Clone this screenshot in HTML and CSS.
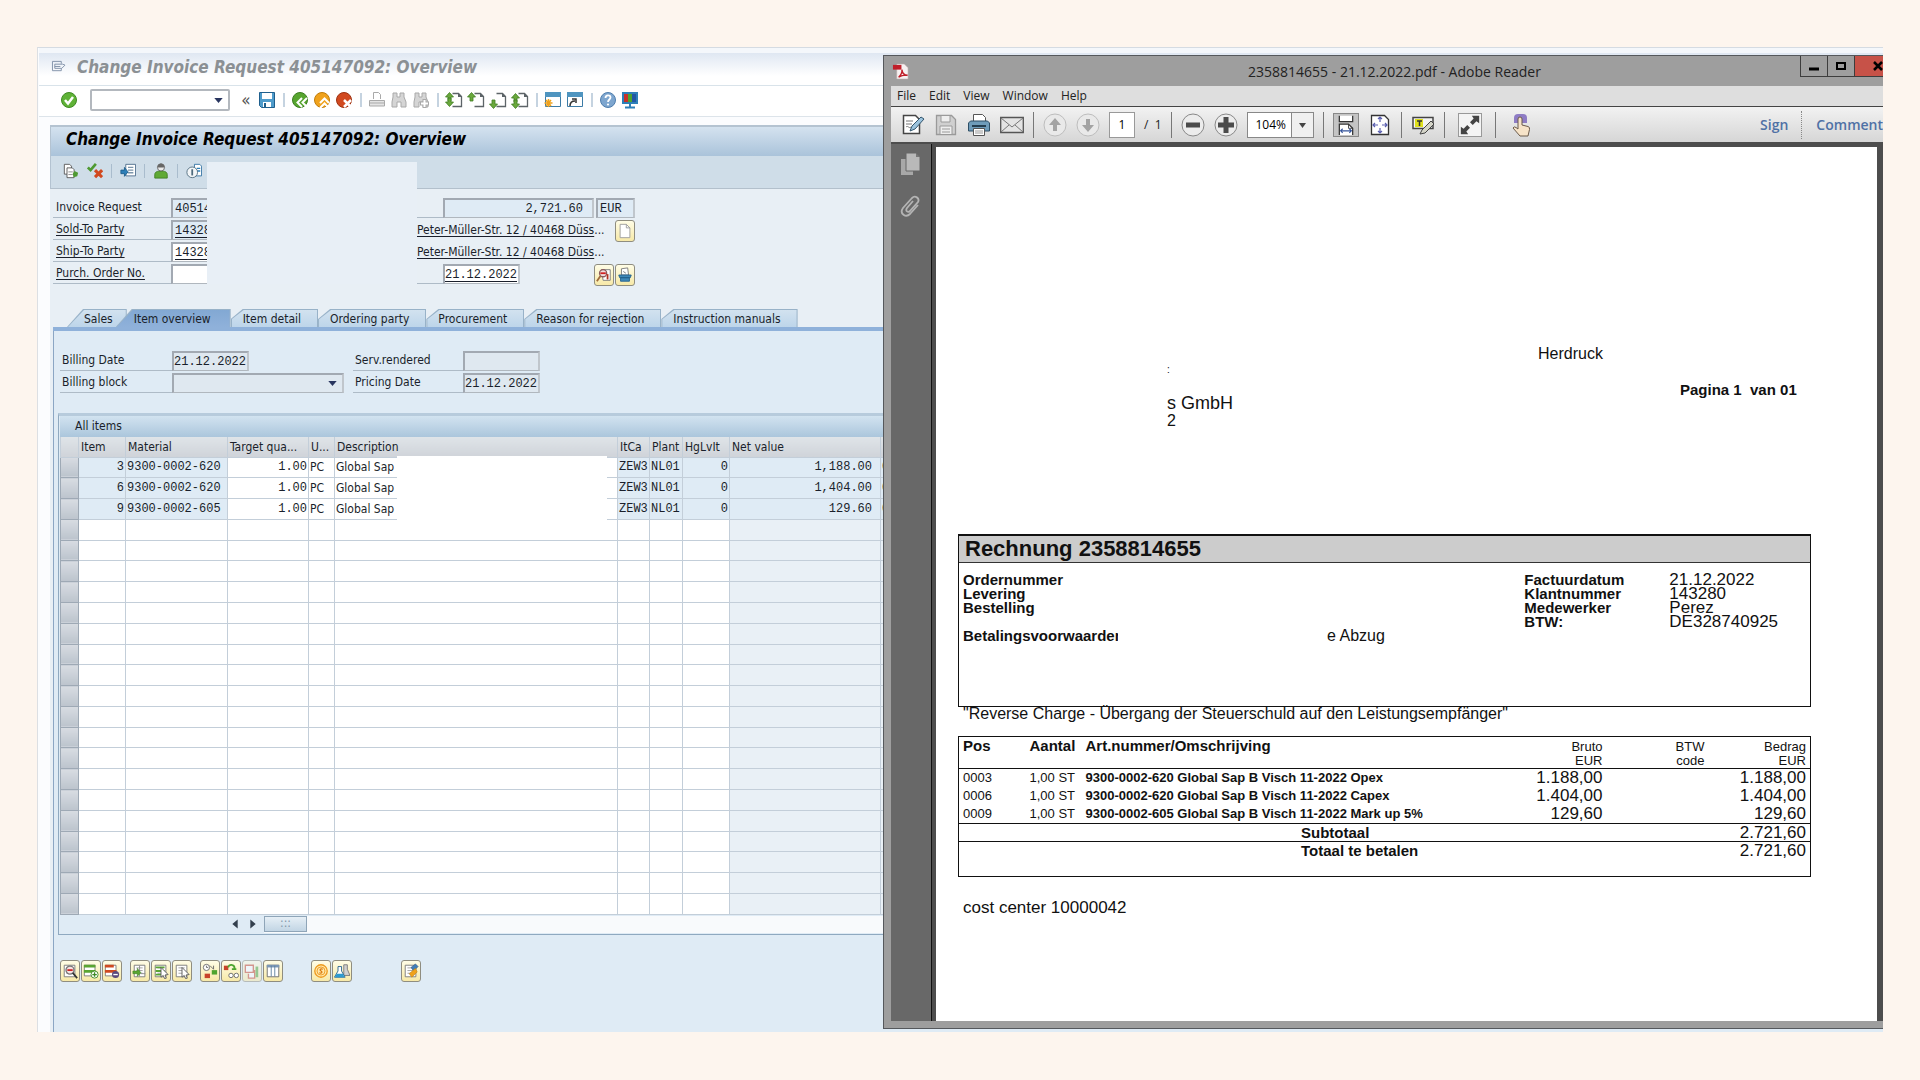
FILE: index.html
```html
<!DOCTYPE html>
<html lang="en">
  <head>
    <meta charset="UTF-8" />
    <meta name="viewport" content="width=device-width, initial-scale=1.0" />
    <title>Change Invoice Request 405147092: Overview</title>
    <link rel="stylesheet" href="styles.css">
  </head>
  <body>
    <!-- Shared icon shapes -->
    <svg class="sprite" aria-hidden="true">
      <symbol id="page" viewBox="0 0 18 18">
        <path d="M7.5 2.5h6l3 3v10h-9" fill="#fff" stroke="#5d6468" stroke-width="1.3" />
        <path d="M13 2v4h4z" fill="#5d6468" />
      </symbol>
      <symbol id="arrow-up" viewBox="0 0 18 18">
        <path d="M4.500 .5l4 4.500H6v4H3V5H.5z" fill="#6aa83c" stroke="#3f7d22" stroke-width=".8" />
      </symbol>
      <symbol id="arrow-down" viewBox="0 0 18 18">
        <path d="M4.500 17.500l4-4.500H6V9H3v4H.5z" fill="#6aa83c" stroke="#3f7d22" stroke-width=".8" />
      </symbol>
      <symbol id="binoculars" viewBox="0 0 18 18">
        <path d="M3 2h4v4h3V2h4v4l2 5v5h-5v-5H7v5H2v-5l1-5z" fill="#d5d5d5" stroke="#a9a9a9" />
      </symbol>
      <symbol id="sheet" viewBox="0 0 18 18">
        <path d="M2.500 2.500h12v13h-12z" fill="#fff" stroke="#777" />
        <path d="M5 5.500h7M5 8.500h7M5 11.500h7" stroke="#999" />
      </symbol>
      <symbol id="cursor" viewBox="0 0 18 18">
        <path d="M9 5l8 8-3.500.5L15 17l-2 .5-1.500-3.500L9 16z" fill="#fff" stroke="#555" />
      </symbol>
    </svg>

    <main class="desktop">
      <!-- SAP window -->
      <section class="sap">
        <header class="sap-title">
          <svg class="exit-icon" viewBox="0 0 16 14"><path d="M11 4V1.500H1.500v10H11V9M4 4.500h8.500L15 5.500 11.500 9H4zM4 7h6" fill="none" stroke="#7f90a8" /></svg>
          <h1>Change Invoice Request 405147092: Overview</h1>
        </header>

        <div class="sap-commands">
          <button class="icon" aria-label="Enter"><svg viewBox="0 0 18 18"><circle cx="9" cy="9" r="7.500" fill="#5fb236" stroke="#3f8a24" /><path d="M5 9l3 3.500L13 6" fill="none" stroke="#fff" stroke-width="2.500" /></svg></button>
          <select class="command" aria-label="Command"><option></option></select>
          <button class="icon chevrons" aria-label="Collapse">«</button>
          <button class="icon" aria-label="Save"><svg viewBox="0 0 18 18"><path d="M1.500 1.500h15v15h-13l-2-2z" fill="#4f9ccb" stroke="#1f5f8d" /><path d="M4 2h10v6H4zM5 11h8v5H5z" fill="#fff" /><path d="M6 12h2v4H6z" fill="#1f5f8d" /></svg></button>
          <i class="sep"></i>
          <button class="icon" aria-label="Back"><svg viewBox="0 0 18 18"><circle cx="9" cy="9" r="7.500" fill="#57a52f" stroke="#3b7d1f" /><path d="M11 7l-4.500 4.500L11 16M16 7l-4.500 4.500L16 16" fill="none" stroke="#fff" stroke-width="2" /></svg></button>
          <button class="icon" aria-label="Exit"><svg viewBox="0 0 18 18"><circle cx="9" cy="9" r="7.500" fill="#f0a21c" stroke="#c07c08" /><path d="M7 12l4.500-4.500L16 12M7 17l4.500-4.500L16 17" fill="none" stroke="#fff" stroke-width="2" /></svg></button>
          <button class="icon" aria-label="Cancel"><svg viewBox="0 0 18 18"><circle cx="9" cy="9" r="7.500" fill="#d1491f" stroke="#9e3211" /><path d="M9 9l7 7M16 9l-7 7" stroke="#fff" stroke-width="2.500" /></svg></button>
          <i class="sep"></i>
          <button class="icon" aria-label="Print"><svg viewBox="0 0 18 18"><path d="M5.500 8V1.500h5l2 2V8" fill="#fff" stroke="#a9a9a9" /><path d="M1.500 9.500h15V15h-15z" fill="#e4e4e4" stroke="#a9a9a9" /><path d="M2 12h14" stroke="#a9a9a9" /></svg></button>
          <button class="icon" aria-label="Find"><svg><use href="#binoculars" /></svg></button>
          <button class="icon" aria-label="Find next"><svg viewBox="0 0 18 18"><use href="#binoculars" /><path d="M12.500 8v9M8 12.500h9" stroke="#a9a9a9" stroke-width="4" /><path d="M12.500 9v7M9 12.500h7" stroke="#fff" stroke-width="2" /></svg></button>
          <i class="sep"></i>
          <button class="icon" aria-label="First page"><svg viewBox="0 0 18 18"><use href="#page" /><use href="#arrow-up" y="1" /><use href="#arrow-down" y="-2" /></svg></button>
          <button class="icon" aria-label="Previous page"><svg viewBox="0 0 18 18"><use href="#page" /><use href="#arrow-up" y="1" /></svg></button>
          <button class="icon" aria-label="Next page"><svg viewBox="0 0 18 18"><use href="#page" /><use href="#arrow-down" /></svg></button>
          <button class="icon" aria-label="Last page"><svg viewBox="0 0 18 18"><use href="#page" /><use href="#arrow-up" y="2" /><use href="#arrow-down" /></svg></button>
          <i class="sep"></i>
          <button class="icon" aria-label="New session"><svg viewBox="0 0 18 18"><path d="M1.500 1.500h15v14h-15z" fill="#fff" stroke="#3c7ba6" /><path d="M1 1h16v5H1z" fill="#4f95c0" /><path d="M4.500 8v8M.5 12h8M2 9l5 6M7 9l-5 6" stroke="#f0a21c" stroke-width="1.500" /></svg></button>
          <button class="icon" aria-label="Shortcut"><svg viewBox="0 0 18 18"><path d="M1.500 1.500h15v14h-15z" fill="#fff" stroke="#3c7ba6" /><path d="M1 1h16v5H1z" fill="#4f95c0" /><path d="M4 15c0-3 1-5 5-5M6 8h4v4" fill="none" stroke="#333" stroke-width="1.500" /></svg></button>
          <i class="sep"></i>
          <button class="icon" aria-label="Help"><svg viewBox="0 0 18 18"><circle cx="9" cy="9" r="7.500" fill="#7ea6cf" stroke="#4f7eae" /><path d="M6.500 7c0-3.500 5-3.500 5-.5 0 2-2.500 2-2.500 4.500" fill="none" stroke="#fff" stroke-width="1.800" /><circle cx="9" cy="13.500" r="1.100" fill="#fff" /></svg></button>
          <button class="icon" aria-label="Layout"><svg viewBox="0 0 18 18"><path d="M1 1h16v12H1z" fill="#2d7fb8" /><path d="M3 3h4v8H3z" fill="#c8322b" /><path d="M7 3h4v8H7z" fill="#4ea52f" /><path d="M11 3h4v8h-4z" fill="#2257a5" /><path d="M9 13v3M4 16.500h10" stroke="#2d7fb8" stroke-width="2" /></svg></button>
        </div>

        <div class="sap-body">
          <h2 class="sap-heading">Change Invoice Request 405147092: Overview</h2>
          <div class="sap-actions">
            <button class="icon small" aria-label="Display flow"><svg viewBox="0 0 18 18"><path d="M1.500 1.500h6l2 2v9h-8z" fill="#fff" stroke="#555" /><path d="M4.500 5.500h6l2 2v9h-8z" fill="#fff" stroke="#555" /><path d="M6 10h5M6 13h5" stroke="#888" /><path d="M11 12l2-3 4 2-1 4-4 1z" fill="#4f9a32" /></svg></button>
            <button class="icon small" aria-label="Check"><svg viewBox="0 0 18 18"><path d="M1 5l3 3 6-7" fill="none" stroke="#4f9a32" stroke-width="3" /><path d="M9 8l8 8M17 8l-8 8" stroke="#d1491f" stroke-width="3.500" /></svg></button>
            <i class="sep"></i>
            <button class="icon small" aria-label="Import"><svg viewBox="0 0 18 18"><path d="M6.500 1.500h11v13h-11z" fill="#fff" stroke="#4a6a8a" /><path d="M9 5h6M9 8h6M9 11h6" stroke="#7c95ab" stroke-width="1.500" /><path d="M1 8h4V5l4 5-4 5v-3H1z" fill="#2d7fb8" stroke="#1f5f8d" /></svg></button>
            <i class="sep"></i>
            <button class="icon small" aria-label="Partner"><svg viewBox="0 0 18 18"><path d="M2 17v-4c0-3 3-4 7-4s7 1 7 4v4z" fill="#5fa935" stroke="#3f7d22" /><circle cx="9" cy="5" r="4" fill="#e9e9e9" stroke="#666" /><path d="M5 5c0-6 8-6 8 0z" fill="#666" /></svg></button>
            <i class="sep"></i>
            <button class="icon small" aria-label="Details"><svg viewBox="0 0 18 18"><path d="M9.500 1.500h6l2 2v11h-8z" fill="#fff" stroke="#2d6fa0" /><path d="M12 6h4M12 9h4" stroke="#2d7fb8" stroke-width="1.500" /><circle cx="7" cy="10.500" r="6" fill="#f3f6f8" stroke="#4f6b7d" /><path d="M7 7v7" stroke="#4f6b7d" stroke-width="2" /></svg></button>
          </div>

          <form class="head-form">
            <label class="lbl" for="request">Invoice Request</label>
            <input class="fld ro" id="request" value="405147092" readonly />
            <span class="lead"></span>
            <input class="fld ro num" aria-label="Net value" value="2,721.60" readonly />
            <input class="fld ro cur" aria-label="Currency" value="EUR" readonly />

            <label class="lbl" for="sold-to"><u>Sold-To Party</u></label>
            <input class="fld ro under" id="sold-to" value="143280" readonly />
            <span class="address"><u>Peter-Müller-Str. 12 / 40468 Düss</u>...</span>
            <button class="tool doc-btn" type="button" aria-label="Create"><svg viewBox="0 0 18 18"><path d="M3.500 1.500h7l4 4v11h-11z" fill="#fff" stroke="#999" /><path d="M10.500 1.500v4h4" fill="none" stroke="#999" /></svg></button>

            <label class="lbl" for="ship-to"><u>Ship-To Party</u></label>
            <input class="fld under" id="ship-to" value="143280" />
            <span class="address"><u>Peter-Müller-Str. 12 / 40468 Düss</u>...</span>

            <label class="lbl" for="order-no"><u>Purch. Order No.</u></label>
            <input class="fld" id="order-no" />
            <span class="lead"></span>
            <input class="fld date under" aria-label="Order date" value="21.12.2022" />
            <span class="form-tools">
              <button class="tool" type="button" aria-label="Display document"><svg viewBox="0 0 18 18"><path d="M6 3h10v12H8z" fill="#fff" stroke="#777" /><circle cx="8" cy="7" r="4" fill="#eedede" stroke="#8b5b5b" stroke-width="1.500" /><path d="M5 7h6" stroke="#d02020" stroke-width="2" /><path d="M5 10l-4 6" stroke="#a06a3a" stroke-width="2" /><path d="M13 8v6" stroke="#b03020" stroke-width="2" /></svg></button>
              <button class="tool" type="button" aria-label="Header data"><svg viewBox="0 0 18 18"><path d="M5 2l7-1 1 8H5z" fill="#fff" stroke="#777" /><path d="M7 5l3 2" stroke="#777" /><path d="M2 9h14l-1 3H3zM4 12h10v4H4z" fill="#3f88b8" stroke="#22608c" /></svg></button>
            </span>
            <div class="mask mask-form"></div>
          </form>

          <nav class="tabs">
            <button class="tab first">Sales</button>
            <button class="tab active">Item overview</button>
            <button class="tab">Item detail</button>
            <button class="tab">Ordering party</button>
            <button class="tab">Procurement</button>
            <button class="tab">Reason for rejection</button>
            <button class="tab">Instruction manuals</button>
          </nav>

          <div class="panel">
            <form class="billing">
              <label class="lbl" for="billing-date">Billing Date</label>
              <input class="fld gray date" id="billing-date" value="21.12.2022" readonly />
              <label class="lbl" for="rendered">Serv.rendered</label>
              <input class="fld gray date" id="rendered" readonly />
              <label class="lbl" for="block">Billing block</label>
              <select class="fld gray block" id="block"><option></option></select>
              <label class="lbl" for="pricing">Pricing Date</label>
              <input class="fld gray date" id="pricing" value="21.12.2022" readonly />
            </form>

            <div class="items">
              <h3>All items</h3>
              <div class="items-grid">
                <table id="items">
                  <colgroup>
                    <col class="c-sel"><col class="c-item"><col class="c-mat"><col class="c-qty"><col class="c-unit"><col class="c-desc"><col class="c-cat"><col class="c-plant"><col class="c-lvl"><col class="c-net"><col>
                  </colgroup>
                  <thead>
                    <tr><th></th><th>Item</th><th>Material</th><th>Target qua...</th><th>U...</th><th>Description</th><th>ItCa</th><th>Plant</th><th>HgLvIt</th><th>Net value</th><th></th></tr>
                  </thead>
                  <tbody>
                    <tr class="filled"><td></td><td>3</td><td>9300-0002-620</td><td>1.00</td><td>PC</td><td><span>Global Sap B</span></td><td>ZEW3</td><td>NL01</td><td>0</td><td>1,188.00</td><td>0</td></tr>
                    <tr class="filled"><td></td><td>6</td><td>9300-0002-620</td><td>1.00</td><td>PC</td><td><span>Global Sap B</span></td><td>ZEW3</td><td>NL01</td><td>0</td><td>1,404.00</td><td>0</td></tr>
                    <tr class="filled"><td></td><td>9</td><td>9300-0002-605</td><td>1.00</td><td>PC</td><td><span>Global Sap B</span></td><td>ZEW3</td><td>NL01</td><td>0</td><td>129.60</td><td>0</td></tr>
                  </tbody>
                </table>
                <div class="mask mask-items"></div>
              </div>
              <div class="scroll">
                <button aria-label="Scroll left"><svg viewBox="0 0 18 18"><path d="M12 4v10L6 9z" fill="#333f4d" /></svg></button>
                <button aria-label="Scroll right"><svg viewBox="0 0 18 18"><path d="M6 4v10l6-5z" fill="#333f4d" /></svg></button>
                <div class="track"><div class="thumb">:::</div></div>
              </div>
            </div>

            <div class="item-tools">
              <div class="group">
                <button class="tool" aria-label="Details"><svg viewBox="0 0 18 18"><use href="#sheet" /><circle cx="9" cy="8" r="4.500" fill="#f6e2e2" stroke="#777" stroke-width="1.500" /><path d="M6 8h6" stroke="#d02020" stroke-width="2" /><path d="M12 11l5 6" stroke="#333" stroke-width="2" /></svg></button>
                <button class="tool" aria-label="Insert row"><svg viewBox="0 0 18 18"><path d="M1.500 2.500h12v12h-12z" fill="#fff" stroke="#777" /><path d="M1 2h13v3H1zM1 8h13v3H1z" fill="#5aa532" /><circle cx="13" cy="13" r="4" fill="#fff" stroke="#3f8a24" /><path d="M13 10.500v5M10.500 13h5" stroke="#3f8a24" stroke-width="1.500" /></svg></button>
                <button class="tool" aria-label="Delete row"><svg viewBox="0 0 18 18"><path d="M1.500 2.500h12v12h-12z" fill="#fff" stroke="#777" /><path d="M1 2h10v3H1zM1 8h13v3H1z" fill="#cf4a20" /><circle cx="13" cy="13" r="4" fill="#5b4a7d" /><path d="M10.500 13h5" stroke="#fff" stroke-width="1.500" /></svg></button>
              </div>
              <div class="group">
                <button class="tool" aria-label="Insert item"><svg viewBox="0 0 18 18"><use href="#sheet" /><path d="M8.500 3v12M10 12h5" stroke="#888" /><path d="M1 9h5V6l4 5-4 4v-3H1z" fill="#5aa532" stroke="#3f7d22" stroke-width=".6" /></svg></button>
                <button class="tool" aria-label="Select all"><svg viewBox="0 0 18 18"><use href="#sheet" /><path d="M3 4h10v2H3zM3 8h10v2H3zM3 12h10v2H3z" fill="#5aa532" /><use href="#cursor" /></svg></button>
                <button class="tool" aria-label="Deselect all"><svg viewBox="0 0 18 18"><use href="#sheet" /><use href="#cursor" /></svg></button>
              </div>
              <div class="group">
                <button class="tool" aria-label="Schedule"><svg viewBox="0 0 18 18"><circle cx="5" cy="5" r="3.500" fill="#fff" stroke="#666" /><path d="M5 3v2h2M9 3l4 4M13 3v4" fill="none" stroke="#666" /><path d="M3 12h6v5H3z" fill="#c8432a" /><path d="M11 8h6v5h-6z" fill="#4ea52f" /></svg></button>
                <button class="tool" aria-label="Display flow"><svg viewBox="0 0 18 18"><path d="M1 3h5v5H1z" fill="#c8432a" /><path d="M6 5c0-4 7-4 7 1M10 7h5" fill="none" stroke="#4ea52f" stroke-width="2" /><circle cx="9" cy="14" r="2.500" fill="#fff" stroke="#666" /><circle cx="15" cy="14" r="2.500" fill="#fff" stroke="#666" /></svg></button>
                <button class="tool off" aria-label="Analysis"><svg viewBox="0 0 18 18"><path d="M1.500 2.500h9v8h-9zM5 12v5h7V8" fill="#fff" stroke="#c8432a" stroke-width="1.500" /><path d="M13 4h3v12h-3z" fill="#4ea52f" /></svg></button>
                <button class="tool" aria-label="Configuration"><svg viewBox="0 0 18 18"><path d="M2.500 2.500h13v13h-13z" fill="#fff" stroke="#666" /><path d="M2 2h14v3H2z" fill="#7b97b5" /><path d="M7 3v12M11 3v12" stroke="#5a7d9e" /></svg></button>
              </div>
              <div class="group wide">
                <button class="tool" aria-label="Conditions"><svg viewBox="0 0 18 18"><circle cx="9" cy="9" r="7" fill="#ffe7a8" stroke="#ee9a1e" stroke-width="1.500" /><circle cx="9" cy="9" r="4.500" fill="none" stroke="#ee9a1e" /><path d="M11 7c-3-1-4 1-2 2s1 3-2 2" fill="none" stroke="#d97708" stroke-width="1.300" /></svg></button>
                <button class="tool" aria-label="Batch"><svg viewBox="0 0 18 18"><path d="M11 2h4v5l3 7h-7z" fill="#d0d0d0" stroke="#777" /><path d="M4.500 4h4v5l4 7H.5l4-7z" fill="#fff" stroke="#22608c" /><path d="M3 12h7l2 4H1z" fill="#2d9ad0" /></svg></button>
              </div>
              <div class="group last">
                <button class="tool" aria-label="Texts"><svg viewBox="0 0 18 18"><use href="#sheet" /><path d="M9 5l5-4 3 3-5 5z" fill="#3f7db8" stroke="#22507c" stroke-width=".6" /><path d="M7 12l7-6 2 4-6 6z" fill="#f0a21c" stroke="#b87a10" stroke-width=".6" /></svg></button>
              </div>
            </div>
          </div>
        </div>
      </section>

      <!-- PDF reader window -->
      <section class="reader">
        <header class="reader-title">
          <svg class="pdf-icon" viewBox="0 0 18 18"><path d="M5 1h8l4 4v12H5z" fill="#f6f1f1" stroke="#b9a9a9" stroke-width=".6" /><path d="M1 2h9v5H1z" fill="#c01f2a" /><path d="M7 15c2-2 4-5 3.500-8 .5 4 3 6 6 6-4-.5-7 .5-9.500 2z" fill="none" stroke="#c01f2a" stroke-width="1.500" /></svg>
          <span class="caption">2358814655 - 21.12.2022.pdf - Adobe Reader</span>
          <div class="window-buttons">
            <button aria-label="Minimize"><svg viewBox="0 0 10 10"><path d="M0 8h10" stroke="#000" stroke-width="3" /></svg></button>
            <button aria-label="Maximize"><svg viewBox="0 0 10 10"><path d="M1 2h8v6H1z" fill="none" stroke="#000" stroke-width="2" /></svg></button>
            <button class="close" aria-label="Close"><svg viewBox="0 0 10 10"><path d="M1 1l8 8M9 1L1 9" stroke="#000" stroke-width="2.500" /></svg></button>
          </div>
        </header>

        <nav class="menu">
          <button>File</button><button>Edit</button><button>View</button><button>Window</button><button>Help</button>
        </nav>

        <div class="reader-tools">
          <button class="rt" aria-label="Edit"><svg viewBox="0 0 24 24"><path d="M2.500 2.500h12l4 4v14h-16z" fill="#fff" stroke="#444" stroke-width="1.500" /><path d="M5 8h7M5 11h6M5 14c2-2 3 2 5 0" fill="none" stroke="#777" /><path d="M9 18l2-5 9-9 3 2-9 10z" fill="#9cc3dd" stroke="#33566e" /></svg></button>
          <button class="rt" aria-label="Save"><svg viewBox="0 0 24 24"><path d="M2.500 2.500h15l4 4v15h-19z" fill="#d0d0d0" stroke="#9a9a9a" stroke-width="1.300" /><path d="M7 3v6h9V3M6 21v-8h12v8M8 16h8M8 19h8" fill="#eee" stroke="#9a9a9a" /></svg></button>
          <button class="rt" aria-label="Print"><svg viewBox="0 0 24 24"><path d="M6.500 9V1.500h9l3 3V9" fill="#fff" stroke="#555" /><path d="M1.500 10l2-2h17l2 2v8h-21z" fill="#6f9cba" stroke="#2e4f66" /><path d="M5 13h14" stroke="#243e50" stroke-width="2" /><path d="M6.500 15.500h11v7h-11z" fill="#fff" stroke="#555" /><path d="M8 18h8M8 20h8" stroke="#999" /></svg></button>
          <button class="rt" aria-label="Mail"><svg viewBox="0 0 24 24"><path d="M.7 4.500h22.600v15H.7z" fill="#e4e4e4" stroke="#555" stroke-width="1.300" /><path d="M1 5l11 9 11-9M1 19l8-7M23 19l-8-7" fill="none" stroke="#777" /></svg></button>
          <i class="rsep"></i>
          <button class="rt" aria-label="Previous page"><svg viewBox="0 0 24 24"><circle cx="12" cy="12" r="11" fill="#e9e9e9" stroke="#bdbdbd" /><path d="M12 5l6 7h-4v6h-4v-6H6z" fill="#a3a3a3" /></svg></button>
          <button class="rt" aria-label="Next page"><svg viewBox="0 0 24 24"><circle cx="12" cy="12" r="11" fill="#e9e9e9" stroke="#bdbdbd" /><path d="M12 19l6-7h-4V6h-4v6H6z" fill="#a3a3a3" /></svg></button>
          <input class="page-no" aria-label="Page" value="1" />
          <span class="page-total">/ &nbsp;1</span>
          <i class="rsep"></i>
          <button class="rt" aria-label="Zoom out"><svg viewBox="0 0 24 24"><circle cx="12" cy="12" r="11" fill="#ececec" stroke="#888" /><path d="M5 12h14" stroke="#4b4b4b" stroke-width="5" /></svg></button>
          <button class="rt" aria-label="Zoom in"><svg viewBox="0 0 24 24"><circle cx="12" cy="12" r="11" fill="#ececec" stroke="#888" /><path d="M4 12h16M12 4v16" stroke="#4b4b4b" stroke-width="5" /></svg></button>
          <select class="zoom" aria-label="Zoom"><option>104%</option></select>
          <i class="rsep"></i>
          <button class="rt pressed" aria-label="Fit width"><svg viewBox="0 0 24 24"><path d="M4 1v7h16V1M4 24V11h11l5 5v8" fill="#fff" stroke="#333" stroke-width="1.500" /><path d="M15 11v5h5" fill="none" stroke="#333" /><path d="M6 19h12M8 16.500L5.500 19 8 21.500M16 16.500l2.500 2.500-2.500 2.500" fill="none" stroke="#35549b" stroke-width="1.300" /></svg></button>
          <button class="rt" aria-label="Fit page"><svg viewBox="0 0 24 24"><path d="M3.500 2.500h13l4 4v15h-17z" fill="#fff" stroke="#333" stroke-width="1.300" /><path d="M12 4v5M12 15v5M5 12h5M14 12h5M10 6l2-2 2 2M10 18l2 2 2-2M7 10l-2 2 2 2M17 10l2 2-2 2" fill="none" stroke="#5a5fb0" stroke-width="1.200" /></svg></button>
          <i class="rsep"></i>
          <button class="rt" aria-label="Highlight"><svg viewBox="0 0 24 24"><path d="M2 4.500h20v11H2z" fill="#f4f4f4" stroke="#444" stroke-width="1.500" /><path d="M4 6h8v8H4z" fill="#dfe01c" /><path d="M6 8h5M8.500 8v5" stroke="#333" stroke-width="1.500" /><path d="M9 21l2-4 9-9 3 3-9 9z" fill="#d4d4c8" stroke="#444" /></svg></button>
          <i class="rsep"></i>
          <button class="rt framed" aria-label="Full screen"><svg viewBox="0 0 24 24"><path d="M22 2v8l-3-2-4 4-3-3 4-4-2-3zM2 22v-8l3 2 4-4 3 3-4 4 2 3z" fill="#444" /></svg></button>
          <i class="rsep"></i>
          <button class="rt" aria-label="Touch mode"><svg viewBox="0 0 24 24"><path d="M5 10V5q0-4 4-4h5q4 0 4 4v5z" fill="#8e7cc4" /><path d="M9 16V6q0-2 2-2t2 2v6l6 1.500q2 .5 1.500 3L19 23h-8l-7-8q1-2 3-.5z" fill="#f6e3c8" stroke="#6b5a4a" /></svg></button>
          <a class="pane" href="#sign">Sign</a>
          <a class="pane dotted" href="#comment">Comment</a>
        </div>

        <div class="reader-main">
          <aside class="rail">
            <button class="rt" aria-label="Page thumbnails"><svg viewBox="0 0 24 24"><path d="M3 7h12v16H3z" fill="#a8a8a8" /><path d="M8 1h10l4 4v14H8z" fill="#b9b9b9" stroke="#666" /><path d="M18 1v4h4z" fill="#777" /></svg></button>
            <button class="rt" aria-label="Attachments"><svg viewBox="0 0 24 24"><path d="M20 11l-8 9c-4 4-11 0-7-6L14 4c3-3 8 0 6 4l-8 9c-2 2-5 0-3-3l6-7" fill="none" stroke="#b4b4b4" stroke-width="1.800" /></svg></button>
          </aside>

          <article class="sheet">
            <div class="letter-head">
              <div class="reprint">Herdruck</div>
              <div class="recipient">
                <small>:</small><br /><br />
                <big>s GmbH</big><br />2
              </div>
              <div class="page-of">Pagina 1 &nbsp;van 01</div>
            </div>

            <section class="invoice">
              <h2>Rechnung 2358814655</h2>
              <div class="invoice-info">
                <dl class="info-left">
                  <dt>Ordernummer</dt><dd></dd>
                  <dt>Levering</dt><dd></dd>
                  <dt>Bestelling</dt><dd></dd>
                  <dt>&nbsp;</dt><dd></dd>
                  <dt>Betalingsvoorwaarden</dt><dd>e Abzug</dd>
                </dl>
                <dl class="info-right">
                  <dt>Factuurdatum</dt><dd>21.12.2022</dd>
                  <dt>Klantnummer</dt><dd>143280</dd>
                  <dt>Medewerker</dt><dd>Perez</dd>
                  <dt>BTW:</dt><dd>DE328740925</dd>
                </dl>
              </div>
            </section>

            <p class="note">"Reverse Charge - Übergang der Steuerschuld auf den Leistungsempfänger"</p>

            <table class="lines">
              <colgroup>
                <col class="l-pos"><col class="l-qty"><col><col class="l-gross"><col class="l-vat"><col class="l-sum">
              </colgroup>
              <thead>
                <tr><th>Pos</th><th>Aantal</th><th>Art.nummer/Omschrijving</th><th>Bruto<br />EUR</th><th>BTW<br />code</th><th>Bedrag<br />EUR</th></tr>
              </thead>
              <tbody>
                <tr><td>0003</td><td>1,00 ST</td><td>9300-0002-620 Global Sap B Visch 11-2022 Opex</td><td>1.188,00</td><td></td><td>1.188,00</td></tr>
                <tr><td>0006</td><td>1,00 ST</td><td>9300-0002-620 Global Sap B Visch 11-2022 Capex</td><td>1.404,00</td><td></td><td>1.404,00</td></tr>
                <tr><td>0009</td><td>1,00 ST</td><td>9300-0002-605 Global Sap B Visch 11-2022 Mark up 5%</td><td>129,60</td><td></td><td>129,60</td></tr>
              </tbody>
              <tfoot>
                <tr><th colspan="5">Subtotaal</th><td>2.721,60</td></tr>
                <tr class="total"><th colspan="5">Totaal te betalen</th><td>2.721,60</td></tr>
              </tfoot>
            </table>

            <p class="cost-center">cost center 10000042</p>
          </article>
        </div>
      </section>
    </main>

    <script>
      // Fill the item list up with blank rows
      const body = document.querySelector("#items tbody");
      for (let i = 0; i < 19; i++) {
        const row = body.insertRow();
        for (let c = 0; c < 11; c++) {
          row.insertCell();
        }
      }
    </script>
  </body>
</html>
```
FILE: styles.css
```css
* {
  box-sizing: border-box;
}
body {
  margin: 0;
  background: #fdf5ee;
  font-family: "DejaVu Sans Condensed", "DejaVu Sans", sans-serif;
  font-size: 12px;
  color: #1a1f2b;
}
h1, h2, h3, p, dl, dd {
  margin: 0;
}
button {
  border: none;
  padding: 0;
  background: none;
  font: inherit;
  color: inherit;
}
button svg {
  display: block;
  width: 100%;
  height: 100%;
}
.sprite {
  display: none;
}
.desktop {
  display: grid;
  grid-template-columns: 846fr 1000fr;
  min-height: calc(100vh - 95px);
  margin: 47px 37px 0;
  overflow: hidden;
}

/* SAP window */
.sap {
  grid-area: 1 / 1 / 2 / 3;
  display: flex;
  flex-direction: column;
  min-width: 0;
  padding-left: 1px;
  background: #fbfcfe;
  border-left: 1px solid #dcdfe3;
  border-top: 1px solid #d5dbe2;
}
.sap-title {
  display: flex;
  align-items: center;
  gap: 11px;
  height: 38px;
  padding-left: 12px;
  background: linear-gradient(#f4f7fb 0 5px, #dfe7f2 5px, #fff 28px);
  border-bottom: 1px solid #d9e3ea;
}
.exit-icon {
  width: 15px;
  height: 13px;
}
.sap-title h1,
.sap-heading {
  font-size: 17px;
  font-style: italic;
  line-height: 22px;
}
.sap-title h1 {
  color: #8b9094;
}
.sap-commands {
  display: flex;
  align-items: center;
  gap: 4px;
  height: 31px;
  padding: 0 0 2px 21px;
  background: #fff;
  border-bottom: 1px solid #dde4ea;
}
.icon {
  width: 18px;
  height: 18px;
}
.icon.small {
  width: 16px;
  height: 16px;
}
.chevrons {
  margin: 0 -1px 0 3px;
  font-size: 17px;
  line-height: 14px;
  color: #555;
}
.sep {
  width: 2px;
  height: 14px;
  margin: 0 2px 0 3px;
  background: #c5d3e0;
}
select.command {
  appearance: none;
  width: 140px;
  height: 22px;
  margin-left: 8px;
  border: 2px solid #b3b8be;
  border-radius: 2px;
  background-color: #fff;
}
select.command,
select.block {
  background-image: url("data:image/svg+xml,%3Csvg xmlns='http://www.w3.org/2000/svg' viewBox='0 0 10 6'%3E%3Cpath d='M0 0h10L5 6z' fill='%2328355f'/%3E%3C/svg%3E");
  background-repeat: no-repeat;
  background-position: right 5px center;
  background-size: 9px 5px;
}
.sap-body {
  flex: 1;
  display: flex;
  flex-direction: column;
  margin: 8px 0 0 11px;
  background: #e8eff5;
}
.sap-heading {
  height: 31px;
  padding: 1px 0 0 15px;
  color: #000;
  background: linear-gradient(#d4e2ef, #aac3da);
  border-top: 2px solid #b4c3d1;
  border-left: 1px solid #b4c3d1;
}
.sap-actions {
  display: flex;
  align-items: center;
  gap: 8px;
  height: 33px;
  padding: 0 0 2px 12px;
  background: #cfdde8;
  border-bottom: 1px solid #b3c0cc;
  border-left: 1px solid #b4c3d1;
}
.sap-actions .sep {
  width: 1px;
  margin: 0;
  background: #a9bccd;
}
.head-form {
  position: relative;
  display: grid;
  grid-template-columns: 118px 200px 72px 151px 41px;
  grid-auto-rows: 20px;
  row-gap: 2px;
  padding: 9px 0 0 3px;
  margin-bottom: 25px;
}
.lbl {
  padding-left: 3px;
  line-height: 19px;
  border-bottom: 1px solid #aebbc7;
  white-space: nowrap;
}
.lead {
  border-bottom: 1px solid #aebbc7;
}
.fld {
  width: 100%;
  height: 20px;
  padding: 0 2px;
  border: 2px solid #a2a9b2;
  border-right-color: #c0c6cc;
  border-bottom: 1px solid #b0b7be;
  border-radius: 0;
  background-color: #fff;
  font: 12px "Liberation Mono", monospace;
  color: #1a1f2b;
}
.ro {
  background-color: #dfebf5;
}
.gray {
  background-color: #dfe8f0;
}
.under {
  text-decoration: underline;
  text-underline-offset: 3px;
}
.date {
  width: 77px;
  padding: 0;
}
.num {
  padding-right: 9px;
  text-align: right;
}
.cur {
  width: auto;
  margin-left: 2px;
}
.address {
  grid-column: 3 / 5;
  padding-left: 46px;
  line-height: 20px;
  white-space: nowrap;
}
.address u,
.lbl u {
  text-underline-offset: 2px;
}
.tool {
  width: 20px;
  height: 22px;
  padding: 1px;
  border: 1px solid #8f8d80;
  border-radius: 3px;
  background: linear-gradient(#fffde6, #f7e9a8);
}
.tool.off {
  opacity: 0.5;
}
.doc-btn {
  justify-self: end;
}
.form-tools {
  grid-column: 5;
  display: flex;
  justify-content: flex-end;
  gap: 1px;
}
#ship-to + .address {
  grid-column: 3 / 6;
}
.head-form .date {
  grid-column: 4;
}
.mask {
  position: absolute;
}
.mask-form {
  top: -27px;
  bottom: 0;
  left: 157px;
  width: 210px;
  background: #e8eff6;
}

.tabs {
  display: flex;
  height: 22px;
  padding-left: 14px;
  margin-left: 3px;
  border-bottom: 4px solid #8fb1da;
}
.tab {
  position: relative;
  height: 18px;
  padding: 0 17px 0 12px;
  line-height: 20px;
  background: #98b2c8;
  clip-path: polygon(0 55%, 12px 0, 100% 0, 100% 100%, 0 100%);
  isolation: isolate;
}
.tab::before {
  content: "";
  position: absolute;
  z-index: -1;
  inset: 1px 1px 0;
  background: linear-gradient(#d2e2ef, #bdd5ea);
  clip-path: polygon(0 55%, 12px 0, 100% 0, 100% 100%, 0 100%);
}
.tab.first,
.tab.active,
.tab.first::before,
.tab.active::before {
  clip-path: polygon(0 100%, 16px 0, 100% 0, 100% 100%);
}
.tab.first {
  padding: 0 14px 0 17px;
}
.tab.active {
  margin-left: -11px;
  padding: 0 20px 0 18px;
}
.tab.active::before {
  background: linear-gradient(#82a8d3, #8fb1da);
}
.panel {
  flex: 1;
  margin-left: 3px;
  padding: 20px 0 50px 4px;
  background: #dfebf5;
  border-left: 1px solid #8ba6c4;
}
.billing {
  display: grid;
  grid-template-columns: 112px 172px 119px 77px;
  grid-auto-rows: 20px;
  gap: 2px 0;
  padding-left: 2px;
}
.billing .lbl {
  padding-left: 2px;
}
.billing .lbl:nth-of-type(even) {
  margin-left: 9px;
}
.block {
  appearance: none;
  background-position: right 4px center;
}
.items {
  margin-top: 20px;
  border: 1px solid #8fa9c0;
  border-top: 3px solid #b7cbdc;
  border-right: none;
}
.items h3 {
  height: 21px;
  padding-left: 15px;
  margin-left: 1px;
  line-height: 20px;
  font-size: 12px;
  font-weight: normal;
  background: linear-gradient(#d2e3f0, #abc6dc);
}
.items-grid {
  position: relative;
  margin-left: 1px;
}
#items {
  width: 100%;
  height: 478px;
  table-layout: fixed;
  border-collapse: collapse;
  background: #fff;
}
.c-sel { width: 18px; }
.c-item { width: 47px; }
.c-mat { width: 102px; }
.c-qty { width: 81px; }
.c-unit { width: 26px; }
.c-desc { width: 283px; }
.c-cat { width: 32px; }
.c-plant { width: 33px; }
.c-lvl { width: 47px; }
.c-net { width: 151px; }
#items th,
#items td {
  height: 20px;
  padding: 0 1px;
  border: 1px solid #c3ced9;
  line-height: 16px;
  white-space: nowrap;
}
#items th {
  padding-left: 2px;
  text-align: left;
  font-weight: normal;
  background: linear-gradient(#dfe4e8, #cfd3d9);
  border-top: none;
}
#items td:first-child {
  background: linear-gradient(#d8dce2, #bcc4cd);
  border: 1px solid #9ea9b5;
}
#items td {
  font-family: "Liberation Mono", monospace;
}
#items td:nth-child(2),
#items td:nth-child(4),
#items td:nth-child(9),
#items td:nth-child(10) {
  text-align: right;
}
#items td:nth-child(n + 10) {
  background: #e9f0f6;
}
#items td:nth-child(10) {
  padding-right: 8px;
}
#items .filled td:nth-child(2),
#items .filled td:nth-child(3),
#items .filled td:nth-child(n + 7) {
  background: #dfebf5;
}
#items .filled td:nth-child(5),
#items .filled td:nth-child(6) {
  font-family: "DejaVu Sans Condensed", "DejaVu Sans", sans-serif;
}
.mask-items {
  top: 19px;
  left: 337px;
  width: 210px;
  height: 69px;
  background: #fff;
}
.scroll {
  display: flex;
  height: 19px;
  padding: 1px 0 1px 167px;
}
.scroll button {
  width: 18px;
  height: 16px;
}
.track {
  flex: 1;
  margin-left: 2px;
  background: #f8fafc;
}
.thumb {
  width: 43px;
  height: 16px;
  line-height: 12px;
  text-align: center;
  color: #8296a8;
  border: 1px solid #8fa5b8;
  background: linear-gradient(#e6eff6, #c2d5e4);
}
.item-tools {
  display: flex;
  gap: 8px;
  margin-top: 25px;
  padding-left: 2px;
}
.group {
  display: flex;
  gap: 1px;
}
.group.wide {
  margin-left: 20px;
}
.group.last {
  margin-left: 41px;
}

/* PDF reader window */
.reader {
  grid-area: 1 / 2;
  z-index: 1;
  display: flex;
  flex-direction: column;
  min-width: 0;
  margin: 8px 0 3px;
  padding: 0 0 7px 7px;
  background: #9e9e9e;
  border: 1px solid #55585c;
  border-right: none;
  font-family: "Open Sans", sans-serif;
  color: #222;
}
.reader-title {
  display: flex;
  align-items: center;
  height: 30px;
}
.pdf-icon {
  width: 17px;
  height: 17px;
  margin-left: 1px;
}
.caption {
  flex: 1;
  padding-left: 80px;
  text-align: center;
  font-size: 14px;
}
.window-buttons {
  display: flex;
  align-self: flex-start;
}
.window-buttons button {
  width: 27px;
  height: 21px;
  padding: 5px 8px;
  border: 1px solid #3d3d3d;
  border-top: none;
  border-right: none;
}
.window-buttons .close {
  width: 29px;
  padding: 5px 0 5px 18px;
  background: #c75248;
}
.menu {
  display: flex;
  gap: 13px;
  height: 20px;
  padding-left: 6px;
  font-size: 12px;
  line-height: 18px;
  background: #dedede;
}
.reader-tools {
  display: flex;
  align-items: center;
  gap: 9px;
  height: 38px;
  padding-left: 10px;
  background: linear-gradient(#f2f2f2, #d6d6d6);
  border-top: 1px solid #444;
  border-bottom: 2px solid #4d4d4d;
  overflow: hidden;
}
.rt {
  flex: none;
  width: 24px;
  height: 24px;
}
.rsep {
  flex: none;
  width: 1px;
  height: 26px;
  background: #777;
}
.pressed {
  width: 26px;
  padding: 1px;
  border: 1px solid #888;
  background: #c4c4c4;
}
.framed {
  margin: 0 4px;
  border: 1px solid #999;
  background: #f4f4f4;
}
.framed + .rsep {
  margin-right: 4px;
}
.page-no {
  width: 26px;
  height: 26px;
  border: 1px solid #999;
  background: #fff;
  font: 12px "Open Sans", sans-serif;
  text-align: center;
}
.page-total {
  font-size: 12px;
  white-space: nowrap;
}
.zoom {
  appearance: none;
  width: 67px;
  height: 26px;
  padding-left: 8px;
  border: 1px solid #888;
  border-radius: 0;
  font: 12px "Open Sans", sans-serif;
  background: #fff url("data:image/svg+xml,%3Csvg xmlns='http://www.w3.org/2000/svg' viewBox='0 0 22 24'%3E%3Cpath d='M0 0h22v24H0z' fill='%23f0f0f0'/%3E%3Cpath d='M.5 0v24' stroke='%23888'/%3E%3Cpath d='M8 10h7l-3.500 5z' fill='%23444'/%3E%3C/svg%3E") no-repeat right center / 22px 24px;
}
.pane {
  font-size: 14px;
  font-weight: 600;
  line-height: 28px;
  color: #4f71a5;
  text-decoration: none;
}
.pane:first-of-type {
  margin-left: auto;
}
.dotted {
  padding-left: 14px;
  margin-left: 4px;
  border-left: 1px dotted #888;
}
.reader-main {
  flex: 1;
  display: flex;
  background: #4d4d4d;
}
.rail {
  display: flex;
  flex-direction: column;
  gap: 18px;
  width: 41px;
  padding: 8px 0 0 7px;
  background: #686868;
  border-right: 1px solid #111;
}
.sheet {
  flex: 1;
  margin: 3px 6px 0 4px;
  padding: 0 66px 102px 22px;
  background: #fff;
  font-family: "Liberation Sans", Arial, sans-serif;
  font-size: 16px;
  line-height: 18px;
  color: #111;
}
.letter-head {
  display: grid;
  grid-template-columns: 209fr 371fr 142fr 131fr;
  grid-template-rows: 18px 68px;
  padding-top: 198px;
}
.reprint {
  grid-area: 1 / 3;
}
.recipient {
  grid-area: 1 / 2 / 3 / 3;
  padding-top: 14px;
  line-height: 17px;
}
.recipient small {
  font-size: 10px;
}
.recipient big {
  font-size: 18px;
}
.page-of {
  grid-area: 2 / 4;
  padding-top: 18px;
  font-size: 15px;
  font-weight: bold;
  white-space: nowrap;
}
.invoice {
  margin-top: 103px;
  border: 1px solid #111;
  border-top-width: 2px;
}
.invoice h2 {
  padding-left: 6px;
  font-size: 22px;
  line-height: 26px;
  background: #ccc;
  border-bottom: 1px solid #333;
}
.invoice-info {
  display: grid;
  grid-template-columns: 564fr 287fr;
  padding: 10px 0 63px 4px;
  line-height: 14px;
}
.invoice-info dl {
  display: grid;
  grid-auto-rows: 14px;
}
.invoice-info dt {
  font-size: 15px;
  font-weight: bold;
  overflow-x: clip;
}
.info-left {
  grid-template-columns: 155px 1fr;
}
.info-left dd {
  padding-left: 209px;
}
.info-right {
  grid-template-columns: 145px 1fr;
}
.info-right dd {
  font-size: 17px;
}
.note {
  padding-left: 5px;
  line-height: 14px;
  white-space: nowrap;
}
.lines {
  width: 100%;
  margin-top: 15px;
  table-layout: fixed;
  border-collapse: collapse;
  border: 1px solid #111;
}
.l-pos { width: 67px; }
.l-qty { width: 56px; }
.l-gross { width: 93px; }
.l-vat { width: 102px; }
.l-sum { width: 102px; }
.lines th,
.lines td {
  padding: 0 4px;
  text-align: left;
  vertical-align: top;
  font-size: 13px;
  line-height: 18px;
  white-space: nowrap;
}
.lines thead th {
  height: 32px;
  font-size: 15px;
}
.lines thead th:nth-child(n + 4) {
  padding-top: 3px;
  font-size: 13px;
  font-weight: normal;
  line-height: 14px;
}
.lines tbody td:nth-child(3) {
  font-weight: bold;
}
.lines thead,
.lines tbody,
.lines tfoot tr {
  border-bottom: 1px solid #111;
}
.lines th:nth-child(n + 4),
.lines td:nth-child(n + 4),
.lines tfoot td {
  text-align: right;
}
.lines td:nth-child(n + 4),
.lines tfoot td {
  font-size: 17px;
}
.lines tfoot th,
.lines tfoot td {
  line-height: 17px;
}
.lines tfoot th {
  padding-left: 342px;
  font-size: 15px;
}
.lines .total {
  height: 35px;
}
.cost-center {
  margin-top: 22px;
  padding-left: 5px;
  font-size: 17px;
}
```
